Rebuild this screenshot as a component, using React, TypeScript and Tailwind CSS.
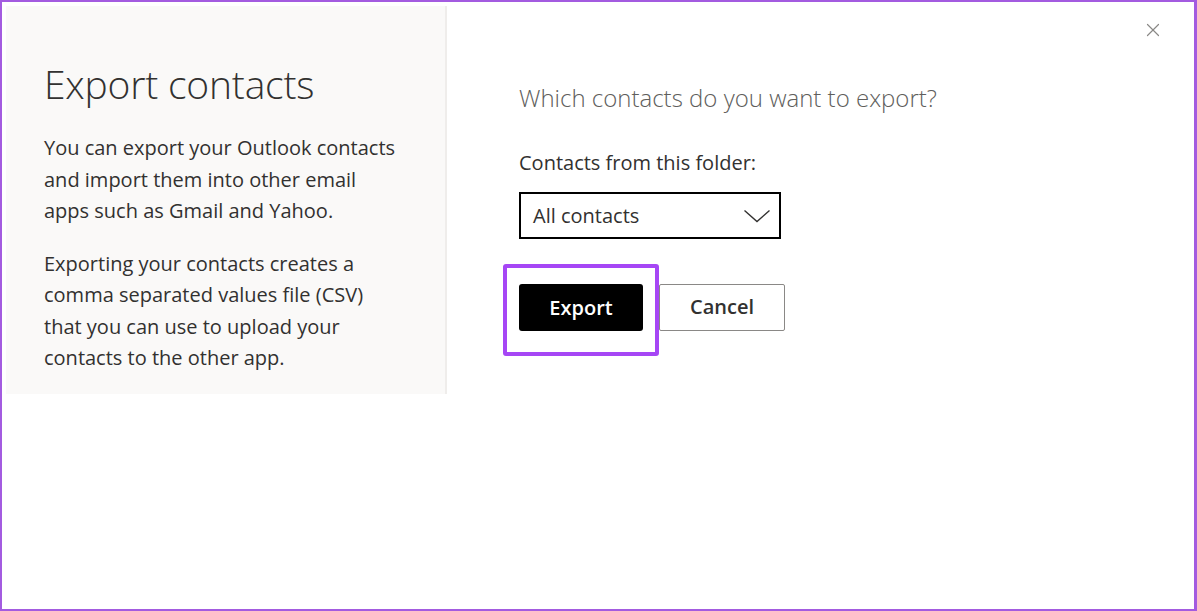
import { X } from 'lucide-react';

export default function App() {
  return (
    <div
      className="w-[1197px] h-[611px] border-l-2 border-t-2 border-r-[3px] border-b-2 border-[#a35be0] bg-white flex relative overflow-hidden"
      style={{ fontFamily: '"Open Sans", "Noto Sans", sans-serif' }}
    >
      {/* Close */}
      <button className="absolute right-[30px] top-[17px] text-[#8a8886]">
        <X className="h-[22px] w-[22px]" strokeWidth={1.3} />
      </button>

      {/* Left info panel */}
      <div className="w-[441px] h-[388px] mt-[4px] ml-[4px] bg-[#faf9f8] border-r-2 border-[#efedeb] pl-[38px] pr-6 pt-[52px] shrink-0">
        <h1 className="text-[39px] font-light text-[#323130] leading-[52px] tracking-[-0.2px]">Export contacts</h1>
        <div className="mt-[22px] w-[355px] text-[20px] leading-[31.5px] text-[#323130] space-y-[21px]">
          <p>You can export your Outlook contacts and import them into other email apps such as Gmail and Yahoo.</p>
          <p>Exporting your contacts creates a comma separated values file (CSV) that you can use to upload your contacts to the other app.</p>
        </div>
      </div>

      {/* Right form */}
      <div className="pl-[72px] pt-[79px] flex flex-col">
        <h2 className="text-[24px] font-light text-[#605e5c] leading-[34px]">Which contacts do you want to export?</h2>

        <label className="mt-[34px] text-[20px] text-[#323130] leading-[28px]">Contacts from this folder:</label>
        <div className="mt-[15px] w-[262px] h-[47px] border-2 border-black flex items-center justify-between pl-[12px] pr-[8px]">
          <span className="text-[20px] text-[#323130]">All contacts</span>
          <svg width="28" height="14" viewBox="0 0 28 14" fill="none" className="text-[#323130]">
            <path d="M1.5 1.5 L14 12.5 L26.5 1.5" stroke="currentColor" strokeWidth="1.4" />
          </svg>
        </div>

        <div className="mt-[25px] -ml-[16px] flex items-center">
          <div className="border-4 border-[#a646f5] rounded-[3px] pt-[16px] pb-[21px] px-[12px]">
            <button className="w-[124px] h-[47px] bg-black text-white rounded-[3px] text-[20px] font-semibold">
              Export
            </button>
          </div>
          <button className="w-[126px] h-[47px] border border-[#8a8886] rounded-[2px] text-[20px] font-semibold text-[#323130] -mt-[6px]">
            Cancel
          </button>
        </div>
      </div>
    </div>
  );
}
